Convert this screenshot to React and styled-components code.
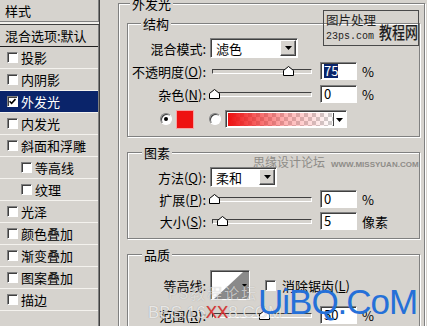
import styled, { createGlobalStyle } from 'styled-components';

const FACE = '#d6d3ce';

const GlobalStyle = createGlobalStyle`
  html, body { margin: 0; padding: 0; background: ${FACE}; }
  * { box-sizing: border-box; }
`;

const Dialog = styled.div`
  position: relative;
  display: flex;
  width: 427px;
  height: 326px;
  overflow: hidden;
  background: ${FACE};
  font-family: "Noto Sans CJK SC", "Noto Sans", sans-serif;
  font-size: 13px;
  color: #000;
`;

/* ---------- style list (left) ---------- */

const StyleList = styled.div`
  flex: none;
  width: 100px;
  border-right: 1px solid #404040;
  box-shadow: inset -1px 0 #808080;
`;

const ListHead = styled.div`
  height: 22px;
  padding-left: 5px;
  display: flex;
  align-items: center;
  border-bottom: 1px solid #808080;
  box-shadow: 0 2px 0 #f2f0ec, 0 3px 0 #404040;
  margin-bottom: 3px;
`;

const BlendRow = styled.div`
  height: 22px;
  padding-left: 5px;
  display: flex;
  align-items: center;
  border-bottom: 1px solid #202020;
  margin-right: 1px;
`;

const ListItem = styled.div`
  height: 22px;
  margin-right: 1px;
  padding-left: ${p => (p.$sub ? 21 : 7)}px;
  display: flex;
  align-items: center;
  gap: 3px;
  border-bottom: 1px solid #f4f2ee;
  background: ${p => (p.$active ? '#0a246a' : 'transparent')};
  color: ${p => (p.$active ? '#fff' : '#000')};
`;

const Check = styled.span`
  flex: none;
  width: 11px;
  height: 11px;
  margin-left: ${p => p.$ml || 0}px;
  background: #fff;
  border: 1px solid;
  border-color: #808080 #fff #fff #808080;
  box-shadow: inset 1px 1px #404040;
  display: flex;
  align-items: center;
  justify-content: center;
`;

/* ---------- options (right) ---------- */

const Panel = styled.div`
  flex: 1;
  min-width: 0;
  padding: 0 2px 0 18px;
`;

const Group = styled.fieldset`
  margin: ${p => p.$mt}px 0 0;
  padding: ${p => p.$pad};
  border: 1px solid #808080;
  box-shadow: inset 1px 1px #fff, 1px 1px #fff;
  min-inline-size: 0;
`;

const Legend = styled.legend`
  margin-left: ${p => p.$ml}px;
  padding: 0 2px;
  line-height: 13px;
  font-size: 13px;
  background: ${FACE};
`;

const Row = styled.div`
  display: flex;
  align-items: center;
  height: ${p => p.$h || 20}px;
  margin-top: ${p => p.$mt || 0}px;
  padding-left: ${p => p.$indent || 0}px;
`;

const Label = styled.span`
  flex: none;
  width: 78px;
  margin-right: 4px;
  text-align: right;
  white-space: nowrap;
`;

const Sunken = styled.div`
  flex: none;
  background: #fff;
  border: 1px solid;
  border-color: #808080 #fff #fff #808080;
  box-shadow: inset 1px 1px #404040;
`;

const Select = styled(Sunken)`
  width: ${p => p.$w}px;
  height: 20px;
  padding: 0 1px 0 5px;
  display: flex;
  align-items: center;
  justify-content: space-between;
`;

const DropBtn = styled.span`
  width: 16px;
  height: 16px;
  background: ${FACE};
  border: 1px solid;
  border-color: #fff #404040 #404040 #fff;
  box-shadow: inset -1px -1px #808080;
  display: flex;
  align-items: center;
  justify-content: center;
`;

const Track = styled.div`
  position: relative;
  flex: none;
  width: 100px;
  height: 5px;
  margin-left: 2px;
  border: 1px solid;
  border-color: #404040 #fff #fff #404040;
  background: ${FACE};
`;

const Thumb = styled.svg`
  position: absolute;
  top: -4px;
`;

const Field = styled(Sunken)`
  width: 37px;
  height: 18px;
  margin-left: 8px;
  padding-left: 3px;
  display: flex;
  align-items: center;
  line-height: 14px;
`;

const Picked = styled.span`
  background: #0a246a;
  color: #fff;
`;

const Unit = styled.span`
  margin-left: 5px;
`;

const Radio = styled.span`
  flex: none;
  width: 12px;
  height: 12px;
  margin-left: ${p => p.$ml || 0}px;
  border-radius: 50%;
  background: #fff;
  border: 1px solid;
  border-color: #808080 #fff #fff #808080;
  box-shadow: inset 1px 1px #404040;
  display: flex;
  align-items: center;
  justify-content: center;
  &::after {
    content: '';
    width: 4px;
    height: 4px;
    border-radius: 50%;
    background: ${p => (p.$on ? '#000' : 'transparent')};
  }
`;

const Swatch = styled.span`
  flex: none;
  width: 16px;
  height: 17px;
  margin-left: 5px;
  background: #ee1111;
  box-shadow: 0 0 0 1px #f3a3a3;
`;

const GradientBox = styled(Sunken)`
  width: 122px;
  height: 18px;
  margin-left: 4px;
  padding: 2px 1px 1px 2px;
  display: flex;
`;

const Ramp = styled.span`
  flex: 1;
  background:
    linear-gradient(90deg, #ee1010, rgba(255, 40, 40, 0.35) 55%, rgba(255, 255, 255, 0)),
    repeating-conic-gradient(#cfcfcf 0 25%, #fff 0 50%) 0 0 / 8px 8px;
`;

const RampDrop = styled.span`
  width: 12px;
  border-left: 1px solid #404040;
  background: #fff;
  display: flex;
  align-items: center;
  justify-content: center;
`;

const ContourBox = styled(Sunken)`
  width: 40px;
  height: 30px;
  padding: 1px 0 0 1px;
  display: flex;
`;

const AaText = styled.span`
  margin-left: 6px;
`;

/* ---------- watermarks over the dialog ---------- */

const Stamp = styled.div`
  position: absolute;
  left: 323px;
  top: 10px;
  width: 96px;
  height: 36px;
  border: 1px solid #4a4a4a;
  display: grid;
  grid-template-columns: 55px 1fr;
  grid-template-rows: 18px 1fr;
  grid-template-areas: "title name" "url name";
  color: #1e1e1e;
  white-space: nowrap;
`;

const StampTitle = styled.span`
  grid-area: title;
  padding-left: 2px;
  font-size: 12.5px;
  line-height: 18px;
`;

const StampUrl = styled.span`
  grid-area: url;
  padding-left: 2px;
  font-family: "Liberation Mono", monospace;
  font-size: 10px;
  line-height: 16px;
`;

const StampName = styled.span`
  grid-area: name;
  align-self: end;
  font-size: 13px;
  line-height: 16px;
  font-weight: 500;
  transform: scaleY(1.3);
  transform-origin: bottom;
  padding-bottom: 2px;
`;

const SiteMark = styled.div`
  position: absolute;
  left: 253px;
  top: 154px;
  display: flex;
  align-items: baseline;
  gap: 6px;
  color: #8e8c88;
  font-size: 12px;
  line-height: 16px;
`;

const SiteUrl = styled.span`
  font-family: "Liberation Sans", sans-serif;
  font-weight: 700;
  font-size: 8px;
`;

const ForumMark = styled.div`
  position: absolute;
  left: 168px;
  top: 283px;
  font-size: 15px;
  line-height: 20px;
  letter-spacing: 2px;
  color: rgba(255, 255, 255, 0.6);
  text-shadow: 0 0 1px rgba(0, 0, 0, 0.25);
`;

const BbsMark = styled.div`
  position: absolute;
  left: 148px;
  top: 303px;
  font-family: "Liberation Sans", sans-serif;
  font-size: 17px;
  line-height: 20px;
  color: rgba(255, 255, 255, 0.75);
  text-shadow: 0 0 1px rgba(0, 0, 0, 0.3);
`;

const Red = styled.span`
  color: #e03434;
`;

const BigMark = styled.div`
  position: absolute;
  left: 258px;
  top: 284px;
  font-family: "Liberation Sans", sans-serif;
  font-size: 35px;
  line-height: 35px;
  letter-spacing: -1px;
  color: #2570d8;
`;

/* ---------- bits ---------- */

const styleItems = [
  { name: '投影' },
  { name: '内阴影' },
  { name: '外发光', checked: true, active: true },
  { name: '内发光' },
  { name: '斜面和浮雕' },
  { name: '等高线', sub: true },
  { name: '纹理', sub: true },
  { name: '光泽' },
  { name: '颜色叠加' },
  { name: '渐变叠加' },
  { name: '图案叠加' },
  { name: '描边' },
];

const Arrow = () => (
  <svg width="7" height="4" viewBox="0 0 7 4">
    <polygon points="0,0 7,0 3.5,4" fill="#000" />
  </svg>
);

const Tick = () => (
  <svg width="7" height="7" viewBox="0 0 7 7">
    <path d="M0.5 3.2 L2.6 5.4 L6.5 1" fill="none" stroke="#000" strokeWidth="1.6" />
  </svg>
);

const Mn = ({ text, k }) => (
  <>
    {text}(<u>{k}</u>):
  </>
);

const SliderRow = ({ label, k, pos, value, unit, picked, mt }) => (
  <Row $mt={mt}>
    <Label><Mn text={label} k={k} /></Label>
    <Track>
      <Thumb width="11" height="10" viewBox="0 0 11 10" style={{ left: pos - 4 }}>
        <polygon points="5.5,0.5 10.5,4.5 10.5,9.5 0.5,9.5 0.5,4.5" fill="#fff" stroke="#000" />
      </Thumb>
    </Track>
    <Field>{picked ? <Picked>{value}</Picked> : value}</Field>
    <Unit>{unit}</Unit>
  </Row>
);

const App = () => (
  <>
    <GlobalStyle />
    <Dialog>
      <StyleList>
        <ListHead>样式</ListHead>
        <BlendRow>混合选项:默认</BlendRow>
        {styleItems.map(item => (
          <ListItem key={item.name} $sub={item.sub} $active={item.active}>
            <Check>{item.checked && <Tick />}</Check>
            {item.name}
          </ListItem>
        ))}
        <ListItem />
      </StyleList>

      <Panel>
        <Group $mt={-3} $pad="0 4px 0 8px">
          <Legend $ml={3}>外发光</Legend>

          <Group $mt={7} $pad="0 0 8px 0">
            <Legend $ml={13}>结构</Legend>
            <Row $mt={8}>
              <Label>混合模式:</Label>
              <Select $w={88}>
                滤色
                <DropBtn><Arrow /></DropBtn>
              </Select>
            </Row>
            <SliderRow mt={3} label="不透明度" k="O" pos={74} value="75" unit="%" picked />
            <SliderRow mt={3} label="杂色" k="N" pos={0} value="0" unit="%" />
            <Row $mt={6} $h={18} $indent={32}>
              <Radio $on />
              <Swatch />
              <Radio $ml={16} />
              <GradientBox>
                <Ramp />
                <RampDrop><Arrow /></RampDrop>
              </GradientBox>
            </Row>
          </Group>

          <Group $mt={9} $pad="0 0 7px 0">
            <Legend $ml={14}>图素</Legend>
            <Row $mt={8}>
              <Label><Mn text="方法" k="Q" /></Label>
              <Select $w={67}>
                柔和
                <DropBtn><Arrow /></DropBtn>
              </Select>
            </Row>
            <SliderRow mt={2} label="扩展" k="P" pos={0} value="0" unit="%" />
            <SliderRow mt={2} label="大小" k="S" pos={8} value="5" unit="像素" />
          </Group>

          <Group $mt={9} $pad="0 0 8px 0">
            <Legend $ml={14}>品质</Legend>
            <Row $mt={9} $h={30}>
              <Label>等高线:</Label>
              <ContourBox>
                <svg width="37" height="27" viewBox="0 0 37 27">
                  <rect width="37" height="27" fill="#fff" />
                  <polygon points="2,27 31,0 37,0 37,27" fill="#8a8a8a" />
                  <polygon points="30,12 35,12 32.5,15" fill="#000" />
                </svg>
              </ContourBox>
              <Check $ml={15} />
              <AaText>消除锯齿(<u>L</u>)</AaText>
            </Row>
            <SliderRow mt={5} label="范围" k="R" pos={50} value="50" unit="%" />
          </Group>
        </Group>
      </Panel>

      <Stamp>
        <StampTitle>图片处理</StampTitle>
        <StampUrl>23ps.com</StampUrl>
        <StampName>教程网</StampName>
      </Stamp>

      <SiteMark>
        思缘设计论坛
        <SiteUrl>WWW.MISSYUAN.COM</SiteUrl>
      </SiteMark>

      <ForumMark>PS教程论坛</ForumMark>
      <BbsMark>BBS.16<Red>XX</Red>8.COM</BbsMark>
      <BigMark>UiBQ.CoM</BigMark>
    </Dialog>
  </>
);

export default App;
